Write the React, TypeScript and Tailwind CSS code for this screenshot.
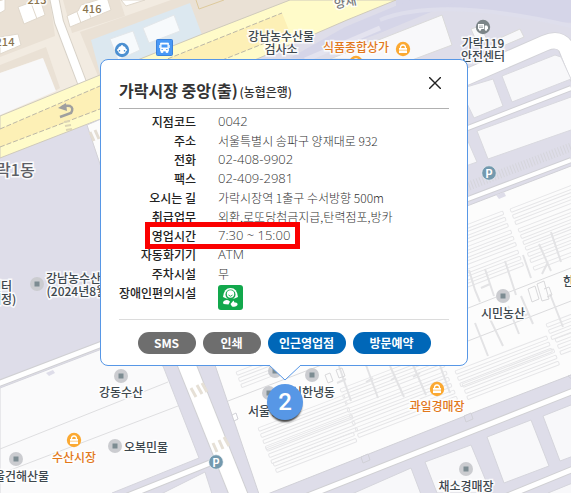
import clsx from "clsx";
import { ReactNode } from "react";

interface Detail {
  label: string;
  value: string;
  numeric?: boolean;
  highlight?: boolean;
}

interface Place {
  name: string;
  x: number;
  y: number;
  tone?: string;
}

interface StallBlock {
  x: number;
  y: number;
  width: number;
  rows: number;
}

const details: Detail[] = [
  { label: "지점코드", value: "0042", numeric: true },
  { label: "주소", value: "서울특별시 송파구 양재대로 932" },
  { label: "전화", value: "02-408-9902", numeric: true },
  { label: "팩스", value: "02-409-2981", numeric: true },
  { label: "오시는 길", value: "가락시장역 1출구 수서방향 500m" },
  { label: "취급업무", value: "외환,로또당첨금지급,탄력점포,방카" },
  { label: "영업시간", value: "7:30 ~ 15:00", numeric: true, highlight: true },
  { label: "자동화기기", value: "ATM", numeric: true },
  { label: "주차시설", value: "무" },
];

const gray = "text-[12px] leading-[13px] text-[#3d474d]";
const orange = "text-[12px] leading-[13px] text-[#e2781b]";
const brown = "text-[11px] leading-[13px] text-[#8a744f]";
const district = "text-[16px] leading-[18px] text-[#5d5f66]";
const road = "text-[12px] leading-[13px] text-[#77787c] -rotate-12";

const places: Place[] = [
  { name: "213", x: 37, y: -1, tone: brown },
  { name: "416", x: 92, y: 8, tone: brown },
  { name: "214", x: 5, y: 41, tone: brown },
  { name: "양재", x: 345, y: 1, tone: road },
  { name: "강남농수산물\n검사소", x: 281, y: 42 },
  { name: "식품종합상가", x: 356, y: 46, tone: orange },
  { name: "가락119\n안전센터", x: 483, y: 49 },
  { name: "가락1동", x: 8, y: 169, tone: district },
  { name: "센터\n(예정)", x: 1, y: 292 },
  { name: "강남농수산물\n(2024년8월)", x: 79, y: 284 },
  { name: "시민농산", x: 503, y: 312 },
  { name: "한성", x: 574, y: 280 },
  { name: "강동수산", x: 121, y: 391 },
  { name: "오복민물", x: 146, y: 446 },
  { name: "수산시장", x: 74, y: 456, tone: orange },
  { name: "서울건해산물", x: 16, y: 475 },
  { name: "서울청과", x: 270, y: 410 },
  { name: "신한냉동", x: 313, y: 391 },
  { name: "과일경매장", x: 437, y: 405, tone: orange },
  { name: "채소경매장", x: 466, y: 485 },
];

const dots = [
  [37, 284],
  [503, 296],
  [121, 376],
  [115, 446],
  [16, 459],
  [275, 371],
  [269, 393],
  [312, 375],
  [466, 469],
];

const shops = [
  [403, 49],
  [356, 63],
  [74, 440],
  [437, 389],
];

const parkings = [
  [489, 173],
  [216, 462],
];

const stalls: StallBlock[] = [
  { x: 440, y: 235, width: 67, rows: 3 },
  { x: 448, y: 254, width: 67, rows: 3 },
  { x: 455, y: 274, width: 67, rows: 3 },
  { x: 510, y: 209, width: 90, rows: 3 },
  { x: 518, y: 229, width: 90, rows: 3 },
  { x: 525, y: 247, width: 90, rows: 3 },
  { x: 533, y: 267, width: 90, rows: 1 },
  { x: 236, y: 372, width: 64, rows: 3 },
  { x: 258, y: 428, width: 92, rows: 4 },
  { x: 266, y: 448, width: 92, rows: 3 },
  { x: 273, y: 463, width: 86, rows: 2 },
  { x: 340, y: 389, width: 106, rows: 3 },
  { x: 347, y: 409, width: 106, rows: 3 },
  { x: 355, y: 428, width: 106, rows: 2 },
  { x: 455, y: 371, width: 98, rows: 3 },
  { x: 462, y: 384, width: 98, rows: 3 },
  { x: 546, y: 324, width: 60, rows: 3 },
  { x: 555, y: 339, width: 60, rows: 3 },
];

const drains = [
  "M339 366l12 35m-5-22l-9 4m29-18l12 33m-5-20l-7 4m24-16l14 31m-8-20l-5 3m22-15l13 30m-6-22l-7 4m25-17l12 33",
  "M469 270l6 20 5 12m5-33l9 27m-4-12l-9 4m24-27l11 34m7-40l8 23m8-34l12 27m-3-9l-6 12m9-42l10 30",
  "M475 323l13 33m2-37l13 27m5-40l11 28m2-38l12 28m-5-10l-9 4m31-24l13 33",
];

function StallRows({ x, y, width, rows }: StallBlock) {
  return (
    <g transform={`translate(${x} ${y}) rotate(-21)`}>
      {Array.from({ length: rows }, (_, i) => (
        <rect key={i} y={i * 6.6} width={width} height="3.6" rx="1" />
      ))}
    </g>
  );
}

function MapCanvas() {
  return (
    <svg className="absolute inset-0 h-full w-full" aria-hidden="true">
      <rect width="100%" height="100%" fill="#dedde9" />

      {/* hill and ramps, top right */}
      <path d="M396 0H2000V62L545 22Q470 2 396 12z" fill="#d5d5e8" />
      <path d="M290 58L345 27 410 0H460L380 33 310 59z" fill="#d5d5e8" />
      <path d="M380 20Q440 -4 571 26" fill="none" stroke="#dedeec" strokeWidth="4" />
      <path d="M305 60L380 28" stroke="#e4e3ef" strokeWidth="5" />
      <g fill="#f8f8fa" stroke="#dadada">
        <path d="M330 59L442 15 452 45 412 60z" />
        <path d="M500 38L520 29 524 37 503 46z" />
        <path d="M471 29L480 26 488 41 478 45z" />
      </g>

      {/* residential blocks */}
      <path d="M0 0H200L203 36 0 120z" fill="#f2ebe1" />
      <path d="M0 0H50L55 36 0 57zM63 0H120L125 16 72 33zM0 65L46 47 60 88 55 91 42 58 0 73z" fill="#eae1d5" />
      <path d="M80 32L171 0H290L200 37 98 76z" fill="#eae1d5" />
      <path d="M0 73L43 58 56 91 0 115z" fill="#f8f8f9" />
      <path d="M91 40L190 3 202 35 100 74z" fill="#dce8f0" />
      <path d="M196 0L199 9 224 0" fill="none" stroke="#ddc99c" />
      <g fill="#fff" stroke="#e0d8cc">
        <path d="M18 7L40 -1 45 15 24 24z" />
        <path d="M31 3L37 19" />
        <path d="M67 16L78 11 81 5 107 -3 111 10 70 27z" />
        <path d="M77 12L81 23M87 7L91 18" />
        <path d="M121 0H145L126 6z" />
        <path d="M0 37L18 34 21 45 0 54z" />
        <path d="M-4 2L5 -1V10L0 13z" />
      </g>
      <g fill="#f7fafc" stroke="#e3e7ea">
        <path d="M110 39L133 31 140 50 118 60z" />
        <path d="M143 28L174 15 180 31 149 43z" />
      </g>
      <path d="M54 -3L59 22 84 88" fill="none" stroke="#d8d2c8" strokeWidth="10" />
      <path d="M54 -3L59 22 84 88" fill="none" stroke="#fff" strokeWidth="8" />

      {/* main road */}
      <path d="M0 116L78 84 100 75 200 35 290 0H396L347 20 257 59 85 125 0 158z" fill="#fffbc9" stroke="#cfcabb" />
      <path d="M0 129L100 86 282 13 290 33 100 109 0 147z" fill="#fdf0b6" />
      <path d="M0 129L100 86 282 13M0 147L100 109 290 33" fill="none" stroke="#bcb7a7" strokeDasharray="5 2" />
      <path d="M60 117L71 113Q74 108 70 106 67 105 62 107" fill="none" stroke="#9f9f9f" strokeWidth="2.5" />
      <path d="M58 108L66 103 67 111z" fill="#9f9f9f" />
      <path d="M64 122l6-1m-5 5l6-1m-5 5l6-1" stroke="#dcd5b5" strokeWidth="2" />
      <path d="M87 125L101 119V167z" fill="#fcfcfc" stroke="#d4d3d8" />
      <path d="M90 132l4 9m1-11l4 9" stroke="#e3ddd3" strokeWidth="3" />

      {/* east streets */}
      <path d="M460 80L545 43Q559 37 566 47L580 82" fill="none" stroke="#d3d3d8" strokeWidth="17" />
      <path d="M460 80L545 43Q559 37 566 47L580 82" fill="none" stroke="#fff" strokeWidth="15" />
      <g fill="#f8f8fa" stroke="#d9d9df">
        <path d="M460 89L493 79 503 106 474 118z" />
        <path d="M502 76L555 55 561 57 571 79 512 102z" />
        <path d="M477 131L571 97 2000 97V130H571L488 159z" />
        <path d="M460 136L467 139 477 162 460 168z" />
      </g>
      <path d="M460 131L571 88" stroke="#d0d0d5" strokeWidth="6" />
      <path d="M460 131L571 88" stroke="#fff" strokeWidth="4" />
      <path d="M466 187L571 147" stroke="#d5d5db" strokeWidth="9" strokeDasharray="1 2" />

      {/* market halls */}
      <path d="M215 365L467 206 571 166H2000V375L571 375 480 410 260 497z" fill="#fcfcfc" stroke="#d1d1d7" />
      <path d="M460 202L571 160" stroke="#d0d0d5" strokeWidth="6" />
      <path d="M460 202L571 160" stroke="#fff" strokeWidth="4" />
      <path d="M496 195l8-3 2 4-7 3z" fill="#dedde9" />
      <g fill="none" stroke="#e6e6e8">
        {stalls.map((block, index) => (
          <StallRows key={index} {...block} />
        ))}
      </g>
      <path d="M228 401L345 356M440 319L571 268M455 346L571 301" stroke="#dbdbdd" />
      {drains.map((d) => (
        <path key={d} d={d} fill="none" stroke="#e3e3e5" strokeWidth="2" />
      ))}
      <path d="M528 289l7-3 4 13-7 3zM537 284l7-3 5 18-7 2zM544 289l5-2 3 8-5 2M325 375l5-2 3 8-5 2zM336 370l6-2 3 8-6 2z" fill="none" stroke="#d9d9db" />
      <path d="M232 415l4-2 2 6-4 2z" fill="#fff" stroke="#d1d1d7" />

      {/* west blocks */}
      <path d="M0 388L115 344 163 366 199 458 112 493 111 2000H0z" fill="#fafafb" stroke="#d5d5dc" />
      <path d="M0 449L168 382M0 474L178 406" stroke="#dedee0" />
      <path d="M-5 385L110 341" stroke="#d0d0d3" strokeWidth="7" />
      <path d="M-5 385L110 341" stroke="#fff" strokeWidth="5" />
      <path d="M46 373l7-3 2 3-6 3z" fill="#dedde9" />
      <path d="M155 497L205 472 213 497z" fill="#fafafb" stroke="#d5d5dc" />
      <path d="M120 499L215 461" stroke="#d0d0d3" strokeWidth="7" />
      <path d="M120 499L215 461" stroke="#fff" strokeWidth="5" />
      <path d="M184 358L240 498" stroke="#d0d0d3" strokeWidth="19" />
      <path d="M184 358L240 498" stroke="#fff" strokeWidth="17" />
      <path d="M191 388l5 9m1-12l5 9m0-11l5 9M213 443l4 9m2-12l4 9m1-12l5 9" stroke="#e6e0d6" strokeWidth="3" />

      {/* southern street */}
      <path d="M361 457l7-3 2 6-7 3zM464 416l7-3 2 6-7 3zM568 376l6-2v7z" fill="#dedde9" stroke="#d1d1d7" />
      <g fill="#f8f8fa" stroke="#d5d5dc">
        <path d="M345 497L411 468 422 497z" />
        <path d="M425 462L471 445 491 493H437z" />
        <path d="M487 437L531 420 549 466 504 483z" />
        <path d="M543 416L576 403V455L560 461z" />
        <path d="M548 493L575 482V497z" />
      </g>
      <path d="M300 499L576 390M500 499L576 468" stroke="#d0d0d3" strokeWidth="7" />
      <path d="M300 499L576 390M500 499L576 468" stroke="#fff" strokeWidth="5" />

      {/* place markers */}
      {dots.map(([x, y]) => (
        <g key={`${x}-${y}`}>
          <circle cx={x} cy={y} r="7" fill="#cbccd0" />
          <rect x={x - 2.5} y={y - 2.5} width="5" height="5" fill="#7d8c92" />
        </g>
      ))}
      {shops.map(([x, y]) => (
        <g key={`${x}-${y}`} transform={`translate(${x} ${y})`}>
          <circle r="7.2" fill="#fba932" />
          <path d="M-4 -1H4V4H-4z" fill="#fff" />
          <path d="M-2.5 -1Q-2.5 -4 0 -4T2.5 -1" fill="none" stroke="#fff" strokeWidth="1.3" />
          <path d="M-4 1.2H4" stroke="#fba932" strokeWidth=".6" />
        </g>
      ))}
      {parkings.map(([x, y]) => (
        <circle key={x} cx={x} cy={y} r="7.2" fill="#7399ae" stroke="#eef2f5" strokeWidth=".6" />
      ))}
      <g transform="translate(122 50)">
        <circle r="7.2" fill="#4d90d1" />
        <circle r="4" fill="#fff" />
        <path d="M-5 0h10M0 -5v2" stroke="#fff" strokeWidth="1.5" />
        <path d="M-2.5 0v1.500M2.500 0v1.500" stroke="#4d90d1" strokeWidth="1.300" />
      </g>
      <g transform="translate(156 39)">
        <rect x=".5" y=".5" width="16" height="16" rx="1" fill="#4898f6" stroke="#3b82da" />
        <path d="M4.5 4h8v8h-8zM5 12h2v1.5H5zM10 12h2v1.5h-2zM3.5 6v3M13.5 6v3" fill="#fff" stroke="#fff" strokeWidth=".7" />
        <path d="M5.5 5.5h6v3h-6zM5.5 10h1.3v1H5.5zM10.2 10h1.3v1h-1.3z" fill="#4898f6" />
      </g>
      <g transform="translate(483 27)">
        <circle r="7.2" fill="#7c8588" />
        <path d="M-5 -3H1V2H-5zM1.7 -1.5H4L5 0V2H1.7z" fill="#fff" />
        <path d="M-4 -1h4M-4 .5h4" stroke="#7c8588" strokeWidth=".6" />
        <circle cx="-3" cy="2.5" r="1.2" fill="#fff" />
        <circle cx="3" cy="2.5" r="1.2" fill="#fff" />
      </g>
    </svg>
  );
}

function MapLabel({ place }: { place: Place }) {
  return (
    <span
      className={clsx(
        "absolute -translate-x-1/2 -translate-y-1/2 whitespace-pre text-center font-medium [-webkit-text-stroke:3px_rgba(255,255,255,0.85)] [paint-order:stroke_fill]",
        place.tone ?? gray
      )}
      style={{ left: place.x, top: place.y }}
    >
      {place.name}
    </span>
  );
}

function AccessibilityIcon() {
  return (
    <svg viewBox="0 0 25 25" className="mt-[2px] size-[25px]" role="img" aria-label="장애인편의시설">
      <rect width="25" height="25" rx="3" fill="#12a84c" />
      <path d="M5 12Q6 3 12.5 3T20 12L16.500 13.500H8.500z" fill="#fff" />
      <circle cx="12.5" cy="9.5" r="5" fill="#12a84c" />
      <circle cx="12.5" cy="9" r="3.7" fill="#fff" />
      <path d="M10.500 10Q12.500 12.500 14.500 10" fill="none" stroke="#12a84c" strokeWidth=".9" />
      <path d="M5 17Q8 13.500 12 16.500L10.500 19.500Q8 19 5.500 19z" fill="#fff" />
      <path d="M12.500 19L15.500 15.500 16.500 17.500Q20 17 19.500 20 18 22.500 14 21.500z" fill="#fff" />
    </svg>
  );
}

function PillButton({ wide, children }: { wide?: boolean; children: ReactNode }) {
  return (
    <button
      type="button"
      className={clsx(
        "h-[22px] rounded-full text-[12px] leading-[22px] font-bold text-white",
        wide ? "w-[78px] bg-[#0067b8]" : "w-[58px] bg-[#6e6e6e]"
      )}
    >
      {children}
    </button>
  );
}

function BranchCard() {
  return (
    <section className="absolute top-[59px] left-[100px] w-[368px] rounded-lg border border-[#5797e6] bg-white px-[18px] pb-[11px]">
      <header className="flex h-[49px] items-end justify-between border-b border-[#b0b0b0] pb-1">
        <h1 className="text-[16px] leading-6 font-bold text-[#333]">
          가락시장 중앙(출) <small className="-ml-0.5 text-[12px] font-medium">(농협은행)</small>
        </h1>
        <button type="button" aria-label="닫기" className="mr-2 mb-[15px] text-[#222]">
          <svg viewBox="0 0 12 12" className="size-3" stroke="currentColor" strokeWidth="1.4">
            <path d="M0 0L12 12M12 0L0 12" />
          </svg>
        </button>
      </header>
      <dl className="border-b border-[#dcdcdc] pt-[3px] pb-[9px] text-[12px] leading-[19px]">
        {details.map((detail) => (
          <div key={detail.label} className="relative flex gap-[22px]">
            <dt className="w-[77px] text-right font-medium text-[#222]">{detail.label}</dt>
            <dd
              className={clsx(
                "font-light text-[#333]",
                detail.numeric && "font-['Open_Sans','Noto_Sans_CJK_KR',sans-serif] text-[13px]"
              )}
            >
              {detail.value}
            </dd>
            {detail.highlight && (
              <span className="absolute -inset-y-1 left-[26px] w-[155px] border-[5px] border-[#fb0000]" />
            )}
          </div>
        ))}
        <div className="flex gap-[22px]">
          <dt className="w-[77px] text-right font-medium whitespace-nowrap text-[#222]">장애인편의시설</dt>
          <dd>
            <AccessibilityIcon />
          </dd>
        </div>
      </dl>
      <div className="mt-3 flex justify-center gap-[7px]">
        <PillButton>SMS</PillButton>
        <PillButton>인쇄</PillButton>
        <PillButton wide>인근영업점</PillButton>
        <PillButton wide>방문예약</PillButton>
      </div>
      <svg viewBox="0 0 32 16" className="absolute top-full left-[168px] h-4 w-8 fill-white">
        <path d="M0 0L16 15L32 0" stroke="#5797e6" />
        <path d="M1 -1H31V0H1z" />
      </svg>
    </section>
  );
}

export default function App() {
  return (
    <main className="relative min-h-screen w-full overflow-hidden font-['Noto_Sans_CJK_KR',sans-serif]">
      <MapCanvas />
      {places.map((place) => (
        <MapLabel key={place.name} place={place} />
      ))}
      {parkings.map(([x, y]) => (
        <span
          key={x}
          className="absolute -translate-x-1/2 -translate-y-1/2 text-[11px] leading-3 font-bold text-white"
          style={{ left: x, top: y }}
        >
          P
        </span>
      ))}
      <BranchCard />
      <span className="absolute top-[384px] left-[267px] size-9 rounded-full bg-[#5797e6] text-center font-['Roboto',sans-serif] text-[24px] leading-9 font-medium text-white shadow-[0_3px_2px_-1px_#444]">
        2
      </span>
    </main>
  );
}
